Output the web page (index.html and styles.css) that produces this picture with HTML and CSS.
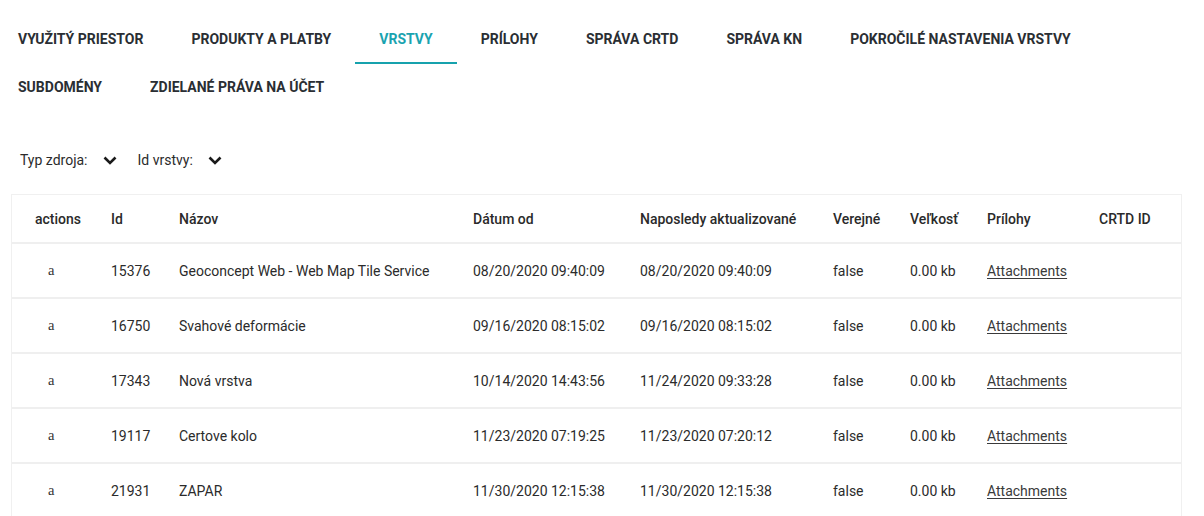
FILE: index.html
```html
<!DOCTYPE html>
<html lang="sk">
<head>
<meta charset="utf-8">
<title>Vrstvy</title>
<link rel="stylesheet" href="styles.css">
</head>
<body>
<nav class="tabs">
  <a class="tab">Využitý priestor</a>
  <a class="tab">Produkty a platby</a>
  <a class="tab active">Vrstvy</a>
  <a class="tab">Prílohy</a>
  <a class="tab">Správa CRTD</a>
  <a class="tab">Správa KN</a>
  <a class="tab">Pokročilé nastavenia vrstvy</a>
  <a class="tab">Subdomény</a>
  <a class="tab">Zdielané práva na účet</a>
</nav>

<div class="filters">
  <div class="filter">
    <span class="filter-label">Typ zdroja:</span>
    <svg class="chev" width="14" height="9" viewBox="0 0 14 9"><path d="M1.5 1.5 L7 7 L12.5 1.5" fill="none" stroke="#1a1a1a" stroke-width="2.6"/></svg>
  </div>
  <div class="filter">
    <span class="filter-label">Id vrstvy:</span>
    <svg class="chev" width="14" height="9" viewBox="0 0 14 9"><path d="M1.5 1.5 L7 7 L12.5 1.5" fill="none" stroke="#1a1a1a" stroke-width="2.6"/></svg>
  </div>
</div>

<div class="card">
  <div class="row head">
    <div class="c c1">actions</div>
    <div class="c">Id</div>
    <div class="c">Názov</div>
    <div class="c">Dátum od</div>
    <div class="c">Naposledy aktualizované</div>
    <div class="c">Verejné</div>
    <div class="c">Veľkosť</div>
    <div class="c">Prílohy</div>
    <div class="c">CRTD ID</div>
  </div>
  <div class="row">
    <div class="c c1 act">a</div>
    <div class="c">15376</div>
    <div class="c">Geoconcept Web - Web Map Tile Service</div>
    <div class="c">08/20/2020 09:40:09</div>
    <div class="c">08/20/2020 09:40:09</div>
    <div class="c">false</div>
    <div class="c">0.00 kb</div>
    <div class="c"><a class="link">Attachments</a></div>
    <div class="c"></div>
  </div>
  <div class="row">
    <div class="c c1 act">a</div>
    <div class="c">16750</div>
    <div class="c">Svahové deformácie</div>
    <div class="c">09/16/2020 08:15:02</div>
    <div class="c">09/16/2020 08:15:02</div>
    <div class="c">false</div>
    <div class="c">0.00 kb</div>
    <div class="c"><a class="link">Attachments</a></div>
    <div class="c"></div>
  </div>
  <div class="row">
    <div class="c c1 act">a</div>
    <div class="c">17343</div>
    <div class="c">Nová vrstva</div>
    <div class="c">10/14/2020 14:43:56</div>
    <div class="c">11/24/2020 09:33:28</div>
    <div class="c">false</div>
    <div class="c">0.00 kb</div>
    <div class="c"><a class="link">Attachments</a></div>
    <div class="c"></div>
  </div>
  <div class="row">
    <div class="c c1 act">a</div>
    <div class="c">19117</div>
    <div class="c">Certove kolo</div>
    <div class="c">11/23/2020 07:19:25</div>
    <div class="c">11/23/2020 07:20:12</div>
    <div class="c">false</div>
    <div class="c">0.00 kb</div>
    <div class="c"><a class="link">Attachments</a></div>
    <div class="c"></div>
  </div>
  <div class="row">
    <div class="c c1 act">a</div>
    <div class="c">21931</div>
    <div class="c">ZAPAR</div>
    <div class="c">11/30/2020 12:15:38</div>
    <div class="c">11/30/2020 12:15:38</div>
    <div class="c">false</div>
    <div class="c">0.00 kb</div>
    <div class="c"><a class="link">Attachments</a></div>
    <div class="c"></div>
  </div>
</div>
</body>
</html>
```

FILE: styles.css
```css
* { box-sizing: border-box; }
html, body { margin: 0; padding: 0; background: #fff; }
body {
  font-family: Roboto, "Liberation Sans", Arial, sans-serif;
  color: #2b2b2b;
  overflow: hidden;
}

.tabs {
  display: flex;
  flex-wrap: wrap;
  padding-top: 16px;
  margin-left: -6px;
  width: 1110px;
}
.tab {
  display: flex;
  align-items: center;
  height: 48px;
  padding: 0 24px;
  font-size: 14px;
  font-weight: 700;
  text-transform: uppercase;
  color: #2a2e33;
  letter-spacing: 0;
  border-bottom: 2px solid transparent;
  cursor: pointer;
}
.tab.active {
  color: #1aa3b0;
  border-bottom-color: #16a2ad;
}

.filters {
  display: flex;
  align-items: center;
  gap: 21px;
  padding: 36px 0 0 20px;
}
.filter {
  display: flex;
  align-items: center;
  gap: 15px;
  height: 24px;
}
.filter-label {
  font-size: 14px;
  color: #2b2b2b;
}
.chev { display: block; }

.card {
  margin: 22px 0 0 11px;
  width: 1171px;
  border: 1px solid #f0f0f0;
  border-bottom: none;
}
.row {
  display: grid;
  grid-template-columns: 99px 68px 294px 167px 193px 77px 77px 112px 1fr;
  align-items: center;
  height: 55px;
  border-bottom: 2px solid #efefef;
  font-size: 14px;
}
.row.head {
  height: 49px;
  font-weight: 500;
  color: #2a2a2a;
}
.c { white-space: nowrap; }
.c1 { padding-left: 23px; }
.act {
  padding-left: 36px;
  font-family: "Liberation Serif", "DejaVu Serif", serif;
  font-size: 14.5px;
  color: #333;
}
.link {
  color: #3a3a3a;
  text-decoration: underline;
  text-underline-offset: 2px;
}
```
